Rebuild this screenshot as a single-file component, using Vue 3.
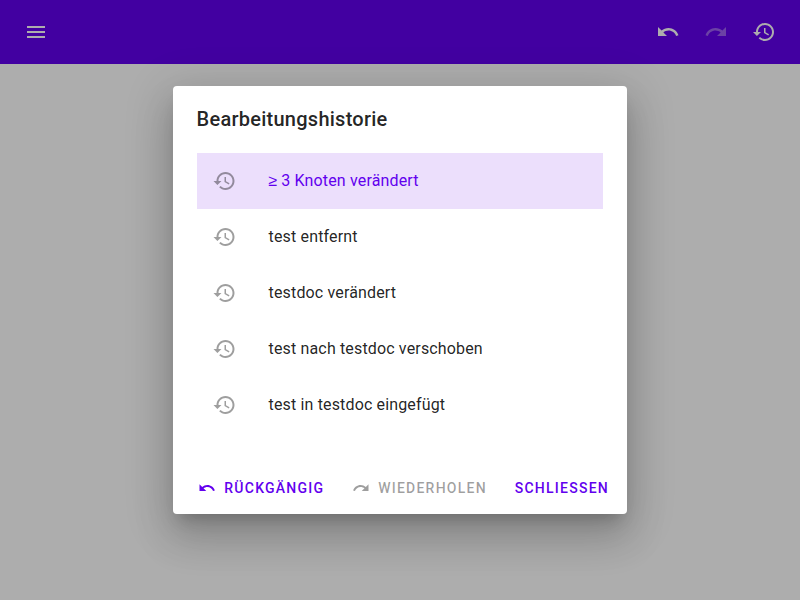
<script setup>
import { ref } from 'vue'

const paths = {
  menu: 'M3 18h18v-2H3v2zm0-5h18v-2H3v2zm0-7v2h18V6H3z',
  undo: 'M12.5 8c-2.65 0-5.05.99-6.9 2.6L2 7v9h9l-3.62-3.62c1.39-1.16 3.16-1.88 5.12-1.88 3.54 0 6.55 2.31 7.6 5.5l2.37-.78C21.08 11.03 17.15 8 12.5 8z',
  redo: 'M18.4 10.6C16.55 8.99 14.15 8 11.5 8c-4.65 0-8.58 3.03-9.96 7.22L3.9 16c1.05-3.19 4.05-5.5 7.6-5.5 1.95 0 3.73.72 5.12 1.88L13 16h9V7l-3.6 3.6z',
  history: 'M13 3c-4.97 0-9 4.03-9 9H1l3.89 3.89.07.14L9 12H6c0-3.87 3.13-7 7-7s7 3.13 7 7-3.13 7-7 7c-1.93 0-3.68-.79-4.94-2.06l-1.42 1.42C8.27 19.99 10.51 21 13 21c4.97 0 9-4.03 9-9s-4.03-9-9-9zm-1 5v5l4.28 2.54.72-1.21-3.5-2.08V8H12z',
}
const entries = [
  { prefix: '≥', text: ' 3 Knoten verändert' },
  { text: 'test entfernt' },
  { text: 'testdoc verändert' },
  { text: 'test nach testdoc verschoben' },
  { text: 'test in testdoc eingefügt' },
]
const selected = ref(0)
</script>

<template>
  <div class="page">
    <header class="bar">
      <button class="icon-button" aria-label="Menü"><svg viewBox="0 0 24 24"><path :d="paths.menu" /></svg></button>
      <span class="spacer"></span>
      <button class="icon-button" aria-label="Rückgängig"><svg viewBox="0 0 24 24"><path :d="paths.undo" /></svg></button>
      <button class="icon-button dim" aria-label="Wiederholen"><svg viewBox="0 0 24 24"><path :d="paths.redo" /></svg></button>
      <button class="icon-button" aria-label="Historie"><svg viewBox="0 0 24 24"><path :d="paths.history" /></svg></button>
    </header>
    <div class="scrim">
      <section class="dialog" role="dialog">
        <h2>Bearbeitungshistorie</h2>
        <ul>
          <li v-for="(entry, i) in entries" :key="entry.text" :class="{ selected: i === selected }" @click="selected = i">
            <svg viewBox="0.5 0 24 24"><path :d="paths.history" /></svg>
            <span class="label"><span v-if="entry.prefix" class="symbol">{{ entry.prefix }}</span>{{ entry.text }}</span>
          </li>
        </ul>
        <footer>
          <button class="action"><svg viewBox="0 0 24 24"><path :d="paths.undo" /></svg>Rückgängig</button>
          <button class="action" disabled><svg viewBox="0 0 24 24"><path :d="paths.redo" /></svg>Wiederholen</button>
          <button class="action">Schliessen</button>
        </footer>
      </section>
    </div>
  </div>
</template>

<style>
body { margin: 0; overflow: hidden; }
</style>

<style scoped>
.page { position: relative; height: 100vh; background: #fff; font-family: Roboto, sans-serif; -webkit-font-smoothing: antialiased; }
button { border: 0; background: none; font-family: inherit; cursor: pointer; }
svg { display: block; fill: currentColor; flex: none; }
.bar { display: flex; align-items: center; height: 64px; padding: 8px 12px; box-sizing: border-box; background: #6200ee; color: #fff; }
.spacer { flex: 1; }
.icon-button { width: 48px; height: 48px; padding: 12px; color: inherit; }
.icon-button svg { width: 24px; height: 24px; }
.dim { opacity: .38; }
.scrim { position: absolute; inset: 0; display: flex; align-items: center; justify-content: center; background: rgba(0, 0, 0, .32); }
.dialog { width: 454.8px; height: 428px; box-sizing: border-box; display: flex; flex-direction: column; border-radius: 4px; background: #fff; box-shadow: 0 11px 15px -7px rgba(0, 0, 0, .2), 0 24px 38px 3px rgba(0, 0, 0, .14), 0 9px 46px 8px rgba(0, 0, 0, .12); }
h2 { margin: 0; padding: 17px 24px 18px; font-size: 20px; line-height: 32px; font-weight: 500; letter-spacing: .25px; color: rgba(0, 0, 0, .87); }
ul { list-style: none; margin: 0; padding: 0 24px; flex: 1; }
li { display: flex; align-items: center; gap: 32px; height: 56px; padding: 0 16px; font-size: 16px; letter-spacing: .15px; color: rgba(0, 0, 0, .87); cursor: pointer; }
li svg { width: 24px; height: 24px; color: rgba(0, 0, 0, .38); }
li.selected { background: #ecdffc; color: #6200ee; }
.label { line-height: 20px; }
.symbol { font-family: "Liberation Sans", sans-serif; letter-spacing: -.2px; }
footer { display: flex; align-items: center; justify-content: flex-end; gap: 11.8px; height: 52px; padding: 8px 10.4px 8px 8px; box-sizing: border-box; }
.action { display: flex; align-items: center; height: 36px; padding: 0 8px; font-size: 14px; font-weight: 500; letter-spacing: 1.25px; text-transform: uppercase; color: #6200ee; }
.action svg { width: 18px; height: 18px; margin-right: 8px; }
.action:disabled { color: rgba(0, 0, 0, .38); cursor: default; }
</style>
